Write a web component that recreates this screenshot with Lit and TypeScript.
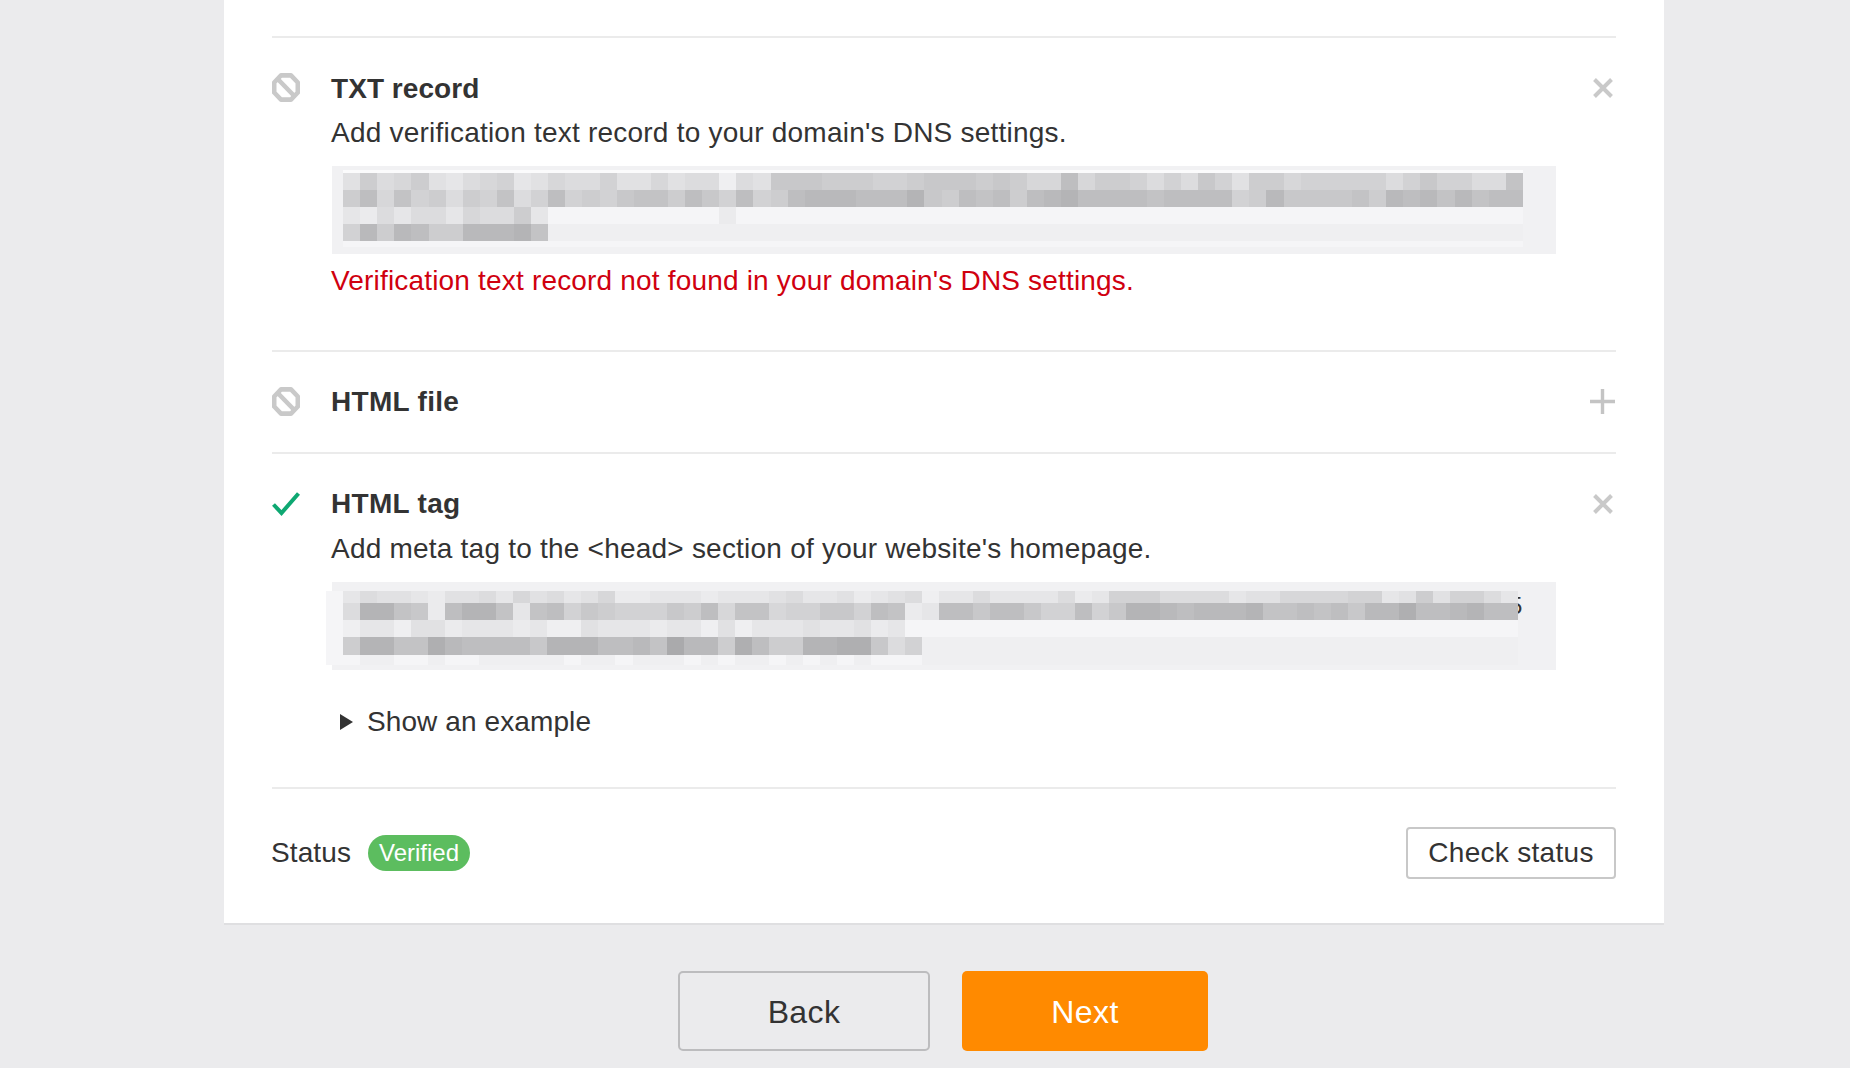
import { LitElement, html, css } from "lit";
import { customElement } from "lit/decorators.js";

/* One character per mosaic cell: 0-d are grey steps, e sits just under the box tone, f and w are lighter. */
const grayOf = (c: string) => {
  if (c === "w") return 251;
  if (c === "f") return 245;
  if (c === "e") return 239;
  return 170 + parseInt(c, 16) * 5;
};

const TXT_RECORD: string[] = [
  "w".repeat(69),
  "b7a97bca98cb9aa8bb9baaeab6667778876" + "6676799497" + "78a8a68b77" + "988888a868" + "8aa5",
  "749587a785a848786557468487433344426" + "74547432" + "444" + "454444" + "873" + "6666" + "5734353544",
  "cdacaac9aa7c" + "ffffffffffdfffffffffff" + "f".repeat(35),
  "837347733325",
  "f".repeat(69),
];

const HTML_TAG: string[] = [
  "f" + "cabbcdbbac9bacb9ddcccdcccbaccbdcbae" + "ccaccccadc888aaaacbb999988cb7b88ac",
  "f" + "a2256d4225c548678886749559886" + "6845dc" + "446446884" + "86" + "2234333" + "25" + "54546" + "33144" + "3244",
  "f" + "ecceb" + "bdccc" + "dceeb" + "cccdc" + "cebec" + "ccbcc" + "bdc" + "f".repeat(36),
  "f" + "7225513444462224435033714772211" + "6a8",
  "f" + "feeffeffeeeeefeefeeefefeefefefefff",
];

@customElement("pixel-mosaic")
export class PixelMosaic extends LitElement {
  static properties = { rows: { attribute: false }, cols: { type: Number }, variant: {} };
  declare rows: string[];
  declare cols: number;
  declare variant: string;

  static styles = css`
    :host { display: block; }
    .grid { display: grid; }
    .txt { width: 1180px; grid-template-rows: 3px 17px 17px 17px 17px 6px; }
    .tag { width: 1192px; margin-left: -17px; grid-template-rows: 12px 17px 17px 18px 10px; }
  `;

  render() {
    const cells = this.rows.flatMap((row) =>
      Array.from(row.padEnd(this.cols, "e").slice(0, this.cols))
    );
    return html`<div
      class="grid ${this.variant}"
      style="grid-template-columns: repeat(${this.cols}, 1fr)"
    >
      ${cells.map((c) => {
        const g = grayOf(c);
        return html`<span style="background: rgb(${g},${g},${Math.min(g + 2, 252)})"></span>`;
      })}
    </div>`;
  }
}

const banIcon = html`<svg class="ban" width="28" height="29" viewBox="0 0 28 29" fill="none" stroke="#c9c9c9" stroke-width="4.6">
  <path d="M9 2.4h10l6.8 7.1v10l-6.8 7.1H9l-6.8-7.1v-10z" stroke-linejoin="round" />
  <path d="M6.2 6.5l15.6 16" />
</svg>`;
const closeIcon = html`<svg width="20" height="20" viewBox="0 0 20 20" fill="none" stroke="#c9c9c9" stroke-width="4">
  <path d="M1.5 1.5l17 17M18.5 1.5l-17 17" />
</svg>`;
const plusIcon = html`<svg width="25" height="25" viewBox="0 0 25 25" fill="none" stroke="#c4c4c4" stroke-width="3.4">
  <path d="M12.5 0v25M0 12.5h25" />
</svg>`;
const checkIcon = html`<svg width="28" height="24" viewBox="0 0 28 24" fill="none" stroke="#0ea872" stroke-width="4">
  <path d="M1.5 12.5l8 8.5L26.5 1.5" />
</svg>`;

@customElement("app-root")
export class AppRoot extends LitElement {
  static styles = css`
    :host {
      display: block;
      min-height: 1068px;
      background: #ebebed;
      font-family: "Liberation Sans", Arial, sans-serif;
      font-size: 28px;
      color: #333;
      overflow: hidden;
    }
    .main { margin-left: 224px; width: 1440px; }
    .card {
      background: #fff;
      padding: 36px 48px 0;
      border-bottom: 2px solid #dfdfe1;
      box-sizing: border-box;
    }
    .row {
      display: grid;
      grid-template-columns: 59px 1fr 60px;
      border-top: 2px solid #ebebeb;
      padding: 28px 0;
    }
    .row.txt { padding: 29px 0 47px; }
    .row.tag { padding-bottom: 0; height: 335px; box-sizing: border-box; }
    .icon-cell { height: 44px; display: flex; align-items: center; }
    .ban { margin-bottom: 2px; }
    .action-cell { height: 44px; display: flex; align-items: center; justify-content: flex-end; padding-right: 3px; }
    .action-cell.plus { padding-right: 1px; margin-top: -1px; }
    .txt .icon-cell, .txt .action-cell { margin-top: -1px; }
    .title { font-weight: 700; line-height: 44px; letter-spacing: 0.3px; }
    .txt .title { letter-spacing: 0.05px; }
    .desc { line-height: 44px; letter-spacing: 0.22px; }
    .tag .desc { margin-top: 1px; }
    .box {
      position: relative;
      margin: 11px 0 0 1px;
      height: 88px;
      box-sizing: border-box;
      background: #f1f1f3;
      padding: 4px 0 0 11px;
    }
    .tag .box { padding-top: 9px; }
    pixel-mosaic { position: relative; z-index: 1; }
    .peek {
      position: absolute;
      left: 1177px;
      top: 10px;
      font-size: 24px;
      line-height: 28px;
      color: #333;
    }
    .error { color: #d0000f; line-height: 44px; margin-top: 5px; letter-spacing: 0.18px; }
    .example {
      display: flex;
      align-items: center;
      gap: 14px;
      margin: 30px 0 0 9px;
      line-height: 44px;
      letter-spacing: 0.1px;
    }
    .tri { width: 0; height: 0; border-left: 13px solid #333; border-top: 8px solid transparent; border-bottom: 8px solid transparent; }
    .status {
      display: flex;
      align-items: center;
      justify-content: space-between;
      border-top: 2px solid #ebebeb;
      height: 136px;
      padding-bottom: 7px;
      box-sizing: border-box;
    }
    .status-left { display: flex; align-items: center; gap: 17px; margin-left: -1px; letter-spacing: 0.1px; }
    .badge {
      background: #5cbd5f;
      color: #fff;
      font-size: 24px;
      line-height: 36px;
      height: 36px;
      padding: 0 11px;
      border-radius: 18px;
      letter-spacing: 0;
    }
    button { font-family: inherit; color: #333; box-sizing: border-box; cursor: pointer; padding: 0; }
    .check {
      width: 210px;
      height: 52px;
      font-size: 28px;
      letter-spacing: 0.3px;
      background: #fff;
      border: 2px solid #c8c8c8;
      border-radius: 4px;
    }
    .nav { display: flex; justify-content: center; gap: 32px; margin-top: 46px; padding-right: 2px; }
    .nav button { height: 80px; font-size: 32px; border-radius: 5px; letter-spacing: 0.4px; padding-top: 2px; }
    .back { width: 252px; background: transparent; border: 2px solid #bcbcbe; }
    .next { width: 246px; background: #ff8a00; border: none; color: #fff; }
  `;

  render() {
    return html`<div class="main">
      <div class="card">
        <section class="row txt">
          <div class="icon-cell">${banIcon}</div>
          <div>
            <div class="title">TXT record</div>
            <div class="desc">Add verification text record to your domain's DNS settings.</div>
            <div class="box"><pixel-mosaic .rows=${TXT_RECORD} cols="69" variant="txt"></pixel-mosaic></div>
            <div class="error">Verification text record not found in your domain's DNS settings.</div>
          </div>
          <div class="action-cell">${closeIcon}</div>
        </section>
        <section class="row">
          <div class="icon-cell">${banIcon}</div>
          <div class="title">HTML file</div>
          <div class="action-cell plus">${plusIcon}</div>
        </section>
        <section class="row tag">
          <div class="icon-cell">${checkIcon}</div>
          <div>
            <div class="title">HTML tag</div>
            <div class="desc">Add meta tag to the &lt;head&gt; section of your website's homepage.</div>
            <div class="box">
              <span class="peek">5</span>
              <pixel-mosaic .rows=${HTML_TAG} cols="70" variant="tag"></pixel-mosaic>
            </div>
            <div class="example"><span class="tri"></span><span>Show an example</span></div>
          </div>
          <div class="action-cell">${closeIcon}</div>
        </section>
        <div class="status">
          <div class="status-left"><span>Status</span><span class="badge">Verified</span></div>
          <button class="check">Check status</button>
        </div>
      </div>
      <div class="nav">
        <button class="back">Back</button>
        <button class="next">Next</button>
      </div>
    </div>`;
  }
}
